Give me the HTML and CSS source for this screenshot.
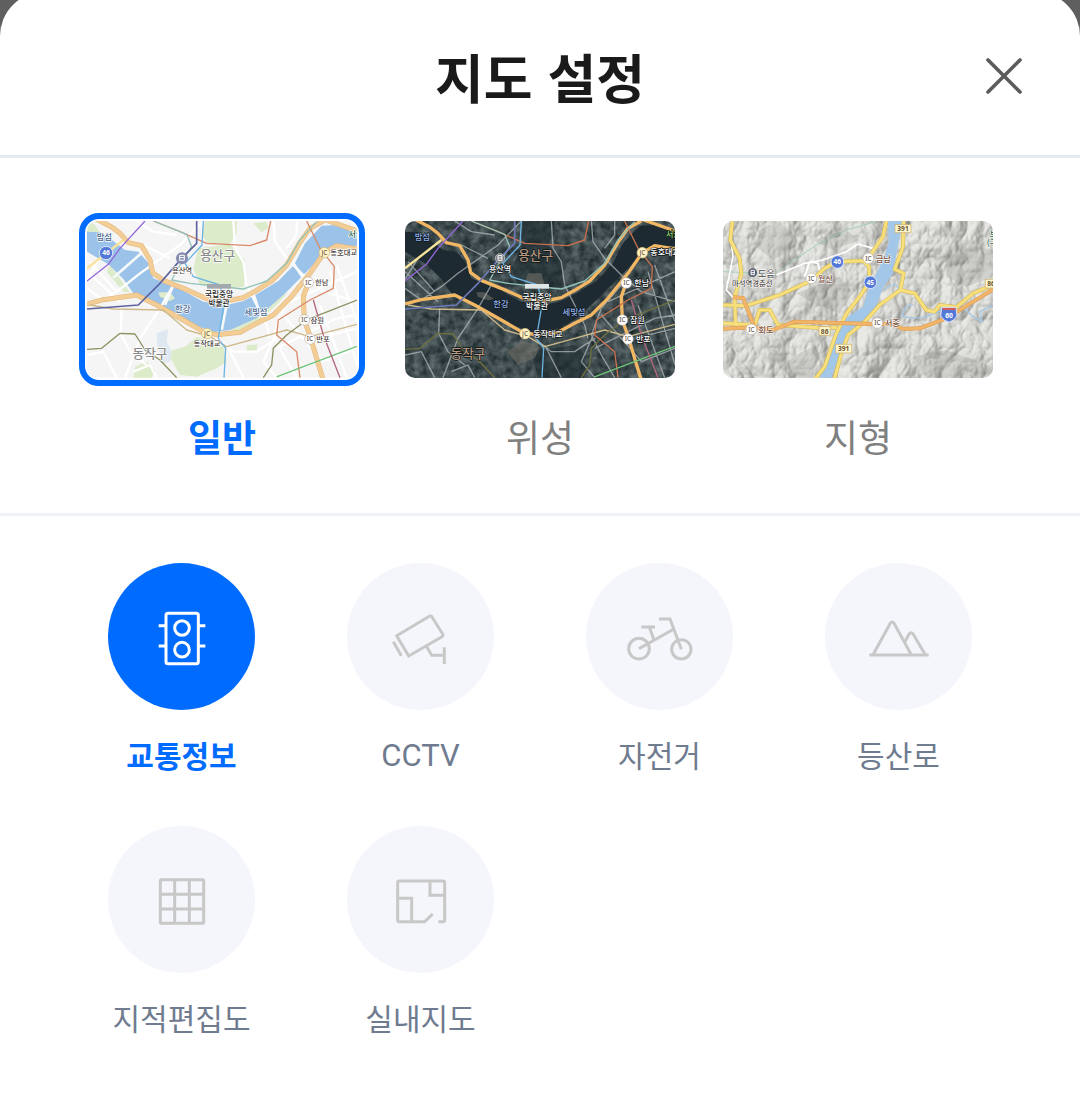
FILE: index.html
```html
<!DOCTYPE html>
<html lang="ko">
<head>
<meta charset="utf-8">
<meta name="viewport" content="width=device-width, initial-scale=1">
<title>지도 설정</title>
<link rel="stylesheet" href="styles.css">
</head>
<body>
<svg class="defs" aria-hidden="true">
  <defs>
    <filter id="hillshade" x="0" y="0" width="100%" height="100%" color-interpolation-filters="sRGB">
      <feTurbulence type="turbulence" baseFrequency="0.008 0.006" numOctaves="4" seed="21" result="noise"/>
      <feDiffuseLighting in="noise" lighting-color="#fffffb" surfaceScale="22" diffuseConstant="1">
        <feDistantLight azimuth="215" elevation="52"/>
      </feDiffuseLighting>
      <feComponentTransfer>
        <feFuncR type="linear" slope="0.42" intercept="0.5"/>
        <feFuncG type="linear" slope="0.42" intercept="0.5"/>
        <feFuncB type="linear" slope="0.42" intercept="0.49"/>
      </feComponentTransfer>
    </filter>
    <filter id="ground" x="0" y="0" width="100%" height="100%" color-interpolation-filters="sRGB">
      <feTurbulence type="fractalNoise" baseFrequency="0.04" numOctaves="4" seed="4"/>
      <feColorMatrix values="0.4 0 0 0 0.05  0.4 0 0 0 0.1  0.4 0 0 0 0.11  0 0 0 0 1"/>
    </filter>
    <path id="river" d="M51 80 90 82 130 108 165 135 205 140 232 170 250 220 330 252 400 290 470 300 520 288 570 262 625 228 672 180 705 115 755 62 800 60 861 80V122L800 126 765 140 715 195 665 245 620 290 560 345 500 372 430 382 380 362 320 335 250 295 190 265 160 222 115 178 51 140Z"/>
    <path id="highway" d="M75 40 125 66 150 85 175 113 215 122 240 165 248 203 280 226 340 250 410 281 470 288 520 278 560 256 605 228 650 180 690 112 720 70 760 48M51 297 100 284 200 270 260 300 340 345 400 380 440 389 510 382 560 355 610 330 660 280 720 205 763 143 800 122 861 132M765 44 861 78M715 232 700 275 703 345 722 400 758 520"/>
    <path id="streets" d="M51 250 100 285 160 245 210 205 330 120 400 48M51 200 150 290M60 170 140 260M90 160 40 240M310 240 270 310 210 400 165 518M155 310 152 385 180 440 230 480M200 48 250 80 320 90M220 120 300 160M490 48 495 130 520 170 530 240 550 280 590 360 600 400M610 48 615 110 650 160 700 210 760 260M680 48 680 90 650 130M700 240 640 310 610 390 640 450 680 518M640 330 760 470 861 430M660 290 861 200M620 430 800 340 861 330M760 260 861 290M750 300 830 518M780 200 861 480M800 180 861 350M470 420 520 518M440 400 490 440 560 440 620 400M51 450 100 440 140 518M190 500 240 480 260 518M620 380 580 470 620 518M740 400 861 370"/>
    <path id="rail" d="M380 40V115L335 160 270 235 205 300 51 312"/>
    <path id="line-blue" d="M400 48 396 120 345 175 370 215 450 240 462 300 445 400 467 430 462 518"/>
    <path id="line-purple" d="M51 228 115 178 150 130 225 48"/>
    <path id="line-red" d="M250 48 330 80 410 115 540 122 590 105 602 48M710 48 750 130 793 185 790 250 720 285 625 345 620 390 680 440 690 518"/>
    <path id="line-olive" d="M51 433 95 430 150 385 195 387 225 435 270 465 320 518M580 518 605 480 610 430 650 390 710 345 861 285"/>
    <path id="line-teal" d="M250 48 350 88 365 125 330 180 305 225 360 235 520 252 590 228 650 175 690 105 740 50"/>
    <path id="line-gold" d="M60 300 130 312 280 315 350 375 420 395 470 425 560 400 650 375 720 395 861 358"/>
    <path id="line-green" d="M620 516 700 485 861 424"/>
    <path id="line-crimson" d="M730 285 760 390 810 518"/>
  </defs>
</svg>

<main class="sheet">
  <header class="sheet-header">
    <h1 class="sheet-title">지도 설정</h1>
    <button class="close" type="button" aria-label="닫기">
      <svg viewBox="0 0 120 120" aria-hidden="true"><path d="M12 12 108 108M108 12 12 108"/></svg>
    </button>
  </header>

  <section class="types" role="radiogroup" aria-label="지도 종류">
    <label class="type">
      <input class="control" type="radio" name="type" value="normal" checked>
      <span class="frame">
        <svg class="map map-normal" viewBox="51 48 810 470" aria-hidden="true">
          <rect class="land" x="51" y="48" width="810" height="470"/>
          <path class="park" d="M405 48H500V85L480 118H415L395 90ZM385 130 480 118 525 165 522 245 470 250 390 240 370 190ZM550 55 590 50 595 70 575 82ZM290 440 345 425 380 395 460 425 470 470 440 490 380 515 330 510ZM195 485 230 470 255 495 245 518H190ZM51 80 90 82 75 60 51 48ZM120 180 180 262 160 260 110 200Z"/>
          <path class="park" d="M530 420 562 418 560 438 530 440Z"/>
          <path class="pond" d="M260 385 295 372 290 410 305 440 300 470 280 475 262 420Z"/>
          <use class="river" href="#river"/>
          <path class="park" d="M265 262 300 262 315 280 300 288 270 275ZM480 375 560 340 640 270 655 262 620 300 560 352 500 380Z"/>
          <use class="streets" href="#streets"/>
          <path class="bridge" d="M130 218 225 135M285 300 308 245M455 375 470 300M550 265 570 325M660 160 700 220"/>
          <use class="highway-edge" href="#highway"/>
          <use class="highway" href="#highway"/>
          <path class="yellow-road" d="M51 190 160 105"/>
          <use class="transit gold" href="#line-gold"/>
          <use class="transit olive" href="#line-olive"/>
          <use class="transit red" href="#line-red"/>
          <use class="transit teal" href="#line-teal"/>
          <use class="transit blue" href="#line-blue"/>
          <use class="transit purple" href="#line-purple"/>
          <use class="transit green" href="#line-green"/>
          <use class="transit crimson" href="#line-crimson"/>
          <use class="rail" href="#rail"/>
          <rect class="museum" x="411" y="237" width="72" height="14"/>
          <circle class="station" cx="336" cy="160" r="18"/>
          <path class="station-mark" d="M329 151H343V166H329ZM329 158H343"/>
          <circle class="route" cx="108" cy="144" r="20"/>
          <text class="route-text" x="108" y="151">46</text>
          <g class="junctions">
            <circle class="jc" cx="763" cy="143" r="16"/><text x="763" y="150">JC</text>
            <circle class="jc" cx="411" cy="386" r="16"/><text x="411" y="393">JC</text>
            <circle cx="715" cy="232" r="16"/><text x="715" y="239">IC</text>
            <circle cx="703" cy="345" r="16"/><text x="703" y="352">IC</text>
            <circle cx="720" cy="402" r="16"/><text x="720" y="409">IC</text>
          </g>
          <g class="names">
            <text class="district" x="443" y="164">용산구</text>
            <text class="district" x="240" y="459">동작구</text>
            <text class="water" x="103" y="104">밤섬</text>
            <text class="water" x="338" y="322">한강</text>
            <text class="water" x="558" y="330">세빛섬</text>
            <text class="spot" x="336" y="204">용산역</text>
            <text class="spot strong" x="447" y="276">국립중앙</text>
            <text class="spot strong" x="447" y="302">박물관</text>
            <text class="spot" x="411" y="423">동작대교</text>
            <text class="spot" x="821" y="151">동호대교</text>
            <text class="spot" x="755" y="241">한남</text>
            <text class="spot" x="742" y="353">잠원</text>
            <text class="spot" x="759" y="410">반포</text>
            <text class="forest" x="858" y="95">서울</text>
          </g>
        </svg>
      </span>
      <span class="type-name">일반</span>
    </label>

    <label class="type">
      <input class="control" type="radio" name="type" value="satellite">
      <span class="frame">
        <svg class="map map-satellite" viewBox="51 48 810 470" aria-hidden="true">
          <rect x="51" y="48" width="810" height="470" filter="url(#ground)"/>
          <path class="woods" d="M405 48H500V85L480 118 525 165 522 245 470 250 390 240 370 190 400 130ZM430 440 560 420 590 450 580 518H450Z"/>
          <path class="bare" d="M360 440 400 405 455 425 440 460 390 480ZM420 205 460 205 470 240 410 235Z"/>
          <use class="river" href="#river"/>
          <path class="bare" d="M265 262 290 262 318 282 300 286 270 275Z"/>
          <use class="streets" href="#streets"/>
          <use class="highway" href="#highway"/>
          <path class="yellow-road" d="M51 190 160 105"/>
          <use class="transit gold" href="#line-gold"/>
          <use class="transit olive" href="#line-olive"/>
          <use class="transit red" href="#line-red"/>
          <use class="transit teal" href="#line-teal"/>
          <use class="transit blue" href="#line-blue"/>
          <use class="transit purple" href="#line-purple"/>
          <use class="transit green" href="#line-green"/>
          <use class="transit crimson" href="#line-crimson"/>
          <use class="rail" href="#rail"/>
          <rect class="museum" x="411" y="237" width="72" height="14"/>
          <circle class="station" cx="336" cy="160" r="14"/>
          <path class="station-mark" d="M330 152H342V166H330ZM330 159H342"/>
          <g class="junctions">
            <circle class="jc" cx="763" cy="143" r="16"/><text x="763" y="150">JC</text>
            <circle class="jc" cx="411" cy="386" r="16"/><text x="411" y="393">JC</text>
            <circle cx="715" cy="234" r="16"/><text x="715" y="241">IC</text>
            <circle cx="703" cy="345" r="16"/><text x="703" y="352">IC</text>
            <circle cx="720" cy="402" r="16"/><text x="720" y="409">IC</text>
          </g>
          <g class="names">
            <text class="district" x="443" y="164">용산구</text>
            <text class="district" x="240" y="459">동작구</text>
            <text class="water" x="103" y="104">밤섬</text>
            <text class="water" x="339" y="306">한강</text>
            <text class="water" x="558" y="330">세빛섬</text>
            <text class="spot" x="336" y="201">용산역</text>
            <text class="spot strong" x="447" y="284">국립중앙</text>
            <text class="spot strong" x="447" y="313">박물관</text>
            <text class="spot" x="480" y="395">동작대교</text>
            <text class="spot" x="831" y="151">동호대교</text>
            <text class="spot" x="761" y="243">한남</text>
            <text class="spot" x="748" y="354">잠원</text>
            <text class="spot" x="766" y="411">반포</text>
            <text class="forest" x="856" y="97">서울</text>
          </g>
        </svg>
      </span>
      <span class="type-name">위성</span>
    </label>

    <label class="type">
      <input class="control" type="radio" name="type" value="terrain">
      <span class="frame">
        <svg class="map map-terrain" viewBox="30 33 810 470" aria-hidden="true">
          <rect x="30" y="33" width="810" height="470" filter="url(#hillshade)"/>
          <path class="slope" d="M140 60 200 33 250 90 220 130 180 150 130 110ZM300 90 400 60 440 90 360 120ZM250 250 380 200 420 250 380 310 300 280ZM700 150 790 110 840 120V200L760 230 700 200ZM200 470 260 430 320 400 300 503H230ZM600 440 700 420 840 470V503H640Z"/>
          <path class="river" d="M525 33H577L560 80 540 190 512 230 488 290 450 340 405 385 375 450 355 503H318L345 440 362 370 405 320 450 290 470 230 510 150 527 100Z"/>
          <path class="stream" d="M840 285 800 305 808 335 780 320 750 290 690 300 640 320 600 325 565 318 580 290 600 284M512 238 545 222 560 238"/>
          <path class="path-green" d="M30 185 185 192 310 105 400 60 485 36"/>
          <path class="local" d="M55 33V100L60 140 48 200 40 240 60 262M190 195 275 160 330 150 400 125 435 102 480 115M275 200 290 155 315 160 320 185"/>
          <g class="yellow">
            <path id="terrain-yellow" d="M58 33 52 90 80 145 85 190 65 262 68 350M30 285 100 287 200 255 295 212 335 175 372 155 450 152 468 170 470 215 440 260 402 308 370 370 335 470 308 505M520 33 510 80 467 143M572 33 570 110 545 178 572 190 562 240 500 285 455 335 405 375 385 430 365 505M562 240 605 250 640 300 665 305 680 285 730 292 780 250 840 225M30 340 125 345 140 300 170 300 195 345 335 355 372 352"/>
            <use class="yellow-fill" href="#terrain-yellow"/>
          </g>
          <path class="orange-edge" d="M30 356 120 352 180 360 245 335 480 342 540 342 570 357 620 355 700 325 840 238M60 262 90 264 122 345"/>
          <path class="orange" d="M30 356 120 352 180 360 245 335 480 342 540 342 570 357 620 355 700 325 840 238M60 262 90 264 122 345"/>
          <circle class="route" cx="373" cy="156" r="19"/><text class="route-text" x="373" y="163">46</text>
          <circle class="route" cx="472" cy="217" r="19"/><text class="route-text" x="472" y="224">45</text>
          <path class="route" d="M686 292H729L732 318Q725 332 708 337 690 332 683 318Z"/>
          <path class="shield-top" d="M689 297H727"/><text class="route-text" x="708" y="324">60</text>
          <g class="plates">
            <rect x="546" y="44" width="48" height="24"/><text x="570" y="64">391</text>
            <rect x="368" y="403" width="48" height="26"/><text x="392" y="424">391</text>
            <rect x="318" y="350" width="34" height="26"/><text x="335" y="371">86</text>
            <rect x="817" y="208" width="34" height="26"/><text x="834" y="229">86</text>
          </g>
          <g class="junctions">
            <circle cx="466" cy="145" r="16"/><text x="466" y="152">IC</text>
            <circle cx="295" cy="205" r="16"/><text x="295" y="212">IC</text>
            <circle cx="115" cy="358" r="16"/><text x="115" y="365">IC</text>
            <circle cx="493" cy="339" r="16"/><text x="493" y="346">IC</text>
          </g>
          <circle class="station" cx="119" cy="188" r="13"/>
          <path class="station-mark" d="M114 181H124V194H114ZM114 188H124"/>
          <g class="names">
            <text class="spot brown" x="511" y="155">금남</text>
            <text class="spot brown" x="337" y="215">월산</text>
            <text class="spot brown" x="159" y="368">회도</text>
            <text class="spot brown" x="538" y="349">서종</text>
            <text class="village" x="160" y="201">도음</text>
            <text class="spot" x="118" y="228">마석역경춘선</text>
            <text class="forest" x="842" y="80">보</text>
            <text class="forest" x="842" y="108">(구)</text>
          </g>
        </svg>
      </span>
      <span class="type-name">지형</span>
    </label>
  </section>

  <section class="layers" aria-label="지도 정보">
    <label class="layer">
      <input class="control" type="checkbox" name="traffic" checked>
      <span class="disc">
        <svg viewBox="0 0 441 441" aria-hidden="true">
          <rect x="174" y="151" width="97" height="151" rx="6"/>
          <circle cx="222" cy="195" r="22"/><circle cx="222" cy="260" r="22"/>
          <path d="M152 188H174M271 188H292M152 249H174M271 249H292"/>
        </svg>
      </span>
      <span class="layer-name">교통정보</span>
    </label>
    <label class="layer">
      <input class="control" type="checkbox" name="cctv">
      <span class="disc">
        <svg viewBox="0 0 441 441" aria-hidden="true">
          <path d="M149 218 247 160Q252 157 255 162L287 213Q290 218 285 221L185 279ZM139 236 163 278M238 249 254 277H292M292 253V303"/>
        </svg>
      </span>
      <span class="layer-name latin">CCTV</span>
    </label>
    <label class="layer">
      <input class="control" type="checkbox" name="bicycle">
      <span class="disc">
        <svg viewBox="0 0 441 441" aria-hidden="true">
          <circle cx="159" cy="257" r="31"/><circle cx="286" cy="259" r="29"/>
          <path d="M159 257 264 198M219 168H252L286 259M166 192H207M190 192 204 231"/>
        </svg>
      </span>
      <span class="layer-name">자전거</span>
    </label>
    <label class="layer">
      <input class="control" type="checkbox" name="trail">
      <span class="disc">
        <svg viewBox="0 0 441 441" aria-hidden="true">
          <path d="M133 276H311M145 274 195 182Q201 172 208 182L258 274M239 238 252 214Q258 205 265 214L300 274"/>
        </svg>
      </span>
      <span class="layer-name">등산로</span>
    </label>
    <label class="layer">
      <input class="control" type="checkbox" name="cadastral">
      <span class="disc">
        <svg viewBox="0 0 441 441" aria-hidden="true">
          <rect x="157" y="161" width="130" height="131" rx="4"/>
          <path d="M200 161V292M244 161V292M157 205H287M157 249H287"/>
        </svg>
      </span>
      <span class="layer-name">지적편집도</span>
    </label>
    <label class="layer">
      <input class="control" type="checkbox" name="indoor">
      <span class="disc">
        <svg viewBox="0 0 441 441" aria-hidden="true">
          <path d="M257 264 233 287H157Q152 287 152 282V170Q152 165 157 165H288Q293 165 293 170V282Q293 287 288 287H274M152 217H194V287M249 165V208H293"/>
        </svg>
      </span>
      <span class="layer-name">실내지도</span>
    </label>
  </section>
</main>
</body>
</html>
```

FILE: styles.css
```css
* {
  box-sizing: border-box;
}

body {
  margin: 0;
  background: #5e5f5e;
  font-family: "Noto Sans CJK KR", "Noto Sans", sans-serif;
}

.defs {
  position: absolute;
  width: 0;
  height: 0;
}

.sheet {
  min-height: calc(100vh + 8px);
  margin-top: -8px;
  border-radius: 44px 44px 0 0;
  background: #fff;
  overflow: hidden;
}

/* Header */
.sheet-header {
  display: grid;
  grid-template-columns: 1fr auto 1fr;
  align-items: center;
  padding: 52px 56px 47px;
  border-bottom: 3px solid #e5e9f0;
}

.sheet-title {
  grid-column: 2;
  margin: 0;
  font-size: 53px;
  font-weight: 700;
  line-height: 64px;
  color: #1a1a1a;
}

.close {
  justify-self: end;
  display: flex;
  padding: 0;
  border: 0;
  background: none;
  cursor: pointer;
}

.close svg {
  width: 40px;
  height: 40px;
  fill: none;
  stroke: #5c5c5c;
  stroke-width: 11;
  stroke-linecap: round;
}

.control {
  position: absolute;
  width: 1px;
  height: 1px;
  margin: 0;
  opacity: 0;
}

/* Map type picker */
.types {
  display: grid;
  grid-template-columns: repeat(3, 1fr);
  gap: 32px;
  padding: 55px 79px 53px;
  border-bottom: 3px solid #eef2f6;
}

.type {
  display: flex;
  flex-direction: column;
  gap: 26px;
  text-align: center;
  cursor: pointer;
}

.frame {
  display: block;
  padding: 2px;
  border: 6px solid transparent;
  border-radius: 20px;
}

.type-name {
  font-size: 37px;
  line-height: 48px;
  color: #808080;
}

.control:checked + .frame {
  border-color: #006cff;
}

.control:checked ~ .type-name,
.control:checked ~ .layer-name {
  font-weight: 700;
  color: #006cff;
}

.control:focus-visible + span {
  outline: 3px solid #8fbfff;
}

/* Layer toggles */
.layers {
  display: grid;
  grid-template-columns: repeat(4, 1fr);
  row-gap: 50px;
  padding: 47px 62px 58px;
}

.layer {
  display: flex;
  flex-direction: column;
  align-items: center;
  gap: 26px;
  cursor: pointer;
}

.disc {
  width: 147px;
  border-radius: 50%;
  background: #f4f6fb;
}

.disc svg {
  display: block;
  width: 100%;
  fill: none;
  stroke: #c8c8c8;
  stroke-width: 9;
}

.control:checked + .disc {
  background: #006cff;
}

.control:checked + .disc svg {
  stroke: #fff;
}

.layer-name {
  font-size: 30px;
  line-height: 36px;
  color: #6f7b8f;
}

.latin {
  font-family: Roboto, sans-serif;
  font-size: 31px;
  line-height: 40px;
}

/* Map thumbnails */
.map {
  display: block;
  width: 100%;
  border-radius: 10px;
  fill: none;
  stroke-linejoin: round;
}

.map text {
  text-anchor: middle;
  stroke: none;
}

.land { fill: #f5f5f6; }
.park { fill: #dcebc9; }
.pond { fill: #dfe8f1; }
.river { fill: #9bc3ea; }
.streets { stroke: #fff; stroke-width: 7; }
.bridge { stroke: #f6f8fa; stroke-width: 8; }
.highway-edge { stroke: #e3b577; stroke-width: 15; }
.highway { stroke: #f3cd96; stroke-width: 12; }
.yellow-road { stroke: #f7e49a; stroke-width: 7; }
.transit { stroke-width: 4; }
.gold { stroke: #cdb98a; }
.olive { stroke: #8c9160; }
.red { stroke: #d98a68; }
.teal { stroke: #93c3b8; }
.blue { stroke: #6cb4e2; }
.purple { stroke: #9467d8; }
.green { stroke: #6fc577; }
.crimson { stroke: #b5687c; }
.rail { stroke: #5d63a0; stroke-width: 5; }
.museum { fill: #a3a8ac; }
.station { fill: #868caf; }
.station-mark { stroke: #fff; stroke-width: 3; }

.route { fill: #5478d8; stroke: #dfe7fa; stroke-width: 3; }
.route-text { font: 700 20px "Noto Sans", sans-serif; fill: #fff; }
.shield-top { stroke: #dc5a55; stroke-width: 6; }

.junctions circle { fill: #fff; stroke: #bdb4ad; stroke-width: 2; }
.junctions .jc { fill: #fff2c0; stroke: #c9b47c; }
.junctions text { font: 500 19px "Noto Sans", sans-serif; fill: #6b5a50; }

.names text { paint-order: stroke; stroke: #fff; stroke-width: 4; }
.names .district { font-size: 38px; font-weight: 500; fill: #8b8b8b; }
.names .water { font-size: 25px; font-weight: 500; fill: #48658f; }
.names .spot { font-size: 22px; font-weight: 500; fill: #4b4340; }
.names .strong { font-size: 23px; fill: #252525; }
.names .forest { font-size: 25px; font-weight: 500; fill: #30674c; }
.names .village { font-size: 28px; fill: #444; }
.names .brown { font-size: 25px; fill: #79503b; }

.map-satellite .woods { fill: #1c2b31; opacity: 0.6; }
.map-satellite .bare { fill: #716f67; opacity: 0.6; }
.map-satellite .river { fill: #1d2a31; }
.map-satellite .streets { stroke: #b7bdc0; stroke-width: 4; opacity: 0.7; }
.map-satellite .highway { stroke: #f1b765; stroke-width: 10; }
.map-satellite .red { stroke: #c9704d; }
.map-satellite .olive { stroke: #6f7040; }
.map-satellite .rail { stroke: #6d79b8; }
.map-satellite .museum { fill: #dfe7e6; }
.map-satellite .station { fill: #76797d; stroke: #ddd; stroke-width: 2; }
.map-satellite .names text { stroke: #101618; }
.map-satellite .names .district { fill: #b5967f; }
.map-satellite .names .water { fill: #8fb1ec; }
.map-satellite .names .spot { font-size: 24px; fill: #fff; }
.map-satellite .names .forest { fill: #8ed06a; }

.map-terrain .slope { fill: #8d8d88; opacity: 0.25; }
.map-terrain .stream { stroke: #a5c8e8; stroke-width: 4; }
.map-terrain .river { fill: #a3c7e8; }
.map-terrain .path-green { stroke: #8cc9a9; stroke-width: 2; }
.map-terrain .local { stroke: #fff; stroke-width: 5; }
.map-terrain .yellow { stroke: #d3b651; stroke-width: 12; }
.map-terrain .yellow-fill { stroke: #f7df7c; stroke-width: 9; }
.map-terrain .orange-edge { stroke: #d79a4e; stroke-width: 12; }
.map-terrain .orange { stroke: #f1b469; stroke-width: 9; }
.map-terrain .station { fill: #555b70; }
.map-terrain .names text { stroke-width: 3; }
.plates rect { fill: #fff6cd; stroke: #c6a765; stroke-width: 2; }
.plates text { font: 700 20px "Noto Sans", sans-serif; fill: #6a5331; }
```
